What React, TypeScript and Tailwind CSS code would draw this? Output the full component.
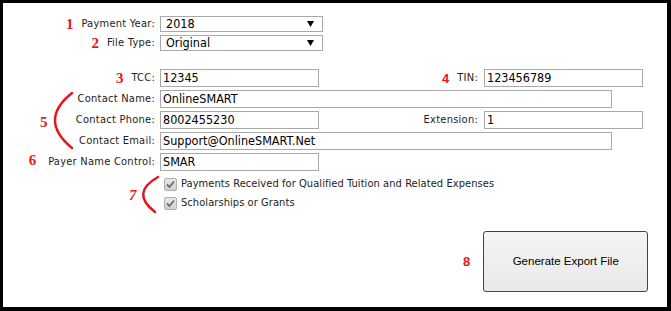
import React from "react"

const labelFont = { fontFamily: '"DejaVu Sans Condensed", "DejaVu Sans", Tahoma, sans-serif' }

function Num({ n, serif = true }: { n: string; serif?: boolean }) {
  return (
    <span
      className="font-bold text-[#e8141c] mr-[8px] leading-none tracking-normal"
      style={{
        fontFamily: serif ? '"Liberation Serif", serif' : '"Liberation Sans", sans-serif',
        fontSize: serif ? "15px" : "13px",
      }}
    >
      {n}
    </span>
  )
}

function Label({ children, className = "w-[152px]" }: { children: React.ReactNode; className?: string }) {
  return (
    <div
      className={`${className} shrink-0 flex items-center justify-end text-[11px] tracking-[0.25px] text-[#222]`}
      style={labelFont}
    >
      {children}
    </div>
  )
}

function Field({ value, w }: { value: string; w: string }) {
  return (
    <div
      className={`${w} h-[18px] border border-[#a9a9a9] bg-white pl-[2px] flex items-center text-[12.5px] text-black`}
      style={labelFont}
    >
      {value}
    </div>
  )
}

function Select({ value }: { value: string }) {
  return (
    <div
      className="w-[163px] h-[16px] border border-[#a9a9a9] bg-white pl-[5px] pr-[8px] flex items-center justify-between text-[12.5px] text-black"
      style={labelFont}
    >
      <span>{value}</span>
      <svg width="7" height="6" viewBox="0 0 7 6">
        <polygon points="0,0 7,0 3.5,6" fill="#000" />
      </svg>
    </div>
  )
}

function Check({ label }: { label: string }) {
  return (
    <div className="flex items-center h-[13px] pl-[164px]">
      <span className="w-[13px] h-[13px] border border-[#b0b0b0] rounded-[2px] bg-gradient-to-b from-[#e8e8e8] to-[#d0d0d0] flex items-center justify-center">
        <svg width="9" height="9" viewBox="0 0 9 9">
          <path d="M1 4.5 L3.5 7 L8 1.5" stroke="#6b6b6b" strokeWidth="1.8" fill="none" />
        </svg>
      </span>
      <span className="ml-[4px] text-[11px] tracking-[0.07px] text-[#222]" style={labelFont}>
        {label}
      </span>
    </div>
  )
}

export default function App() {
  return (
    <div className="relative w-[671px] h-[311px] bg-white border-black border-l-[3px] border-t-[3px] border-r-[4px] border-b-[4px] overflow-hidden">
      <div className="flex flex-col pt-[13px]">
        <div className="flex items-center gap-[5px] h-[16px]">
          <Label>
            <Num n="1" />
            Payment Year:
          </Label>
          <Select value="2018" />
        </div>
        <div className="flex items-center gap-[5px] h-[16px] mt-[3px]">
          <Label>
            <Num n="2" />
            File Type:
          </Label>
          <Select value="Original" />
        </div>

        <div className="flex items-center h-[18px] mt-[18px]">
          <Label>
            <Num n="3" />
            TCC:
          </Label>
          <div className="ml-[5px]">
            <Field value="12345" w="w-[159px]" />
          </div>
          <Label className="w-[159px]">
            <Num n="4" serif={false} />
            TIN:
          </Label>
          <div className="ml-[6px]">
            <Field value="123456789" w="w-[159px]" />
          </div>
        </div>

        <div className="flex items-center h-[18px] mt-[3px]">
          <Label>Contact Name:</Label>
          <div className="ml-[5px]">
            <Field value="OnlineSMART" w="w-[452px]" />
          </div>
        </div>
        <div className="flex items-center h-[18px] mt-[3px]">
          <Label>Contact Phone:</Label>
          <div className="ml-[5px]">
            <Field value="8002455230" w="w-[159px]" />
          </div>
          <Label className="w-[159px]">Extension:</Label>
          <div className="ml-[6px]">
            <Field value="1" w="w-[159px]" />
          </div>
        </div>
        <div className="flex items-center h-[18px] mt-[3px]">
          <Label>Contact Email:</Label>
          <div className="ml-[5px]">
            <Field value="Support@OnlineSMART.Net" w="w-[452px]" />
          </div>
        </div>
        <div className="flex items-center h-[18px] mt-[3px]">
          <Label>
            <span className="mr-[4px]">
              <Num n="6" />
            </span>
            Payer Name Control:
          </Label>
          <div className="ml-[5px]">
            <Field value="SMAR" w="w-[159px]" />
          </div>
        </div>

        <div className="flex flex-col gap-[6px] mt-[7px] -ml-[3px]">
          <Check label="Payments Received for Qualified Tuition and Related Expenses" />
          <Check label="Scholarships or Grants" />
        </div>

        <div className="flex items-center mt-[21px] pl-[460px]">
          <Num n="8" serif={false} />
          <button
            className="ml-[5px] w-[165px] h-[61px] rounded-[3px] border border-[#33475b] bg-gradient-to-b from-[#f5f5f5] to-[#e9e9e9] text-[11.5px] text-black"
            style={{ fontFamily: '"Liberation Sans", Arial, sans-serif' }}
          >
            Generate Export File
          </button>
        </div>
      </div>

      {/* annotation brackets */}
      <svg className="absolute left-0 top-0 pointer-events-none" width="671" height="311">
        <path d="M69 90 Q35 117 69 145" stroke="#e8141c" strokeWidth="2.5" fill="none" strokeLinecap="round" />
        <path d="M155 174 Q127 190 152 209" stroke="#e8141c" strokeWidth="2.5" fill="none" strokeLinecap="round" />
      </svg>
      <span
        className="absolute left-[37px] top-[108px] font-bold text-[15px] text-[#e8141c]"
        style={{ fontFamily: '"Liberation Serif", serif' }}
      >
        5
      </span>
      <span
        className="absolute left-[126px] top-[181px] font-bold italic text-[15px] text-[#e8141c]"
        style={{ fontFamily: '"Liberation Serif", serif' }}
      >
        7
      </span>
    </div>
  )
}
